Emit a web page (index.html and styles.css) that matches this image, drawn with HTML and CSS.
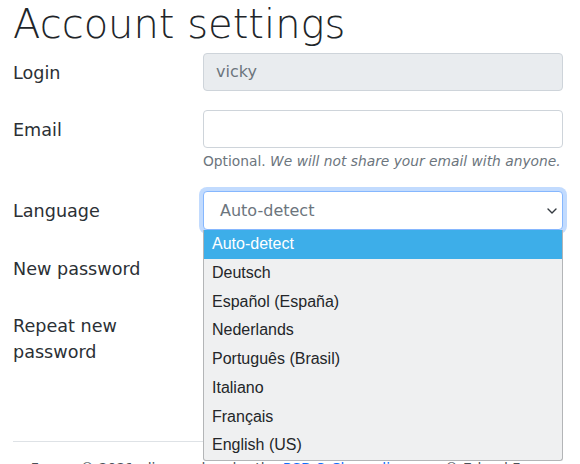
FILE: index.html
```html
<!DOCTYPE html>
<html lang="en">
<head>
<meta charset="utf-8">
<title>Account settings</title>
<link rel="stylesheet" href="styles.css">
</head>
<body>
<main class="page">
  <h1 class="title">Account settings</h1>
  <form class="form">
    <div class="row">
      <label class="label">Login</label>
      <div class="field"><div class="input disabled">vicky</div></div>
    </div>
    <div class="row">
      <label class="label">Email</label>
      <div class="field">
        <div class="input"></div>
        <div class="help">Optional. <em>We will not share your email with anyone.</em></div>
      </div>
    </div>
    <div class="row">
      <label class="label">Language</label>
      <div class="field">
        <div class="select-wrap">
          <div class="input select focus">
            <span>Auto-detect</span>
            <svg class="chev" width="10" height="6" viewBox="0 0 10 6"><path d="M1 1 5 5 9 1" fill="none" stroke="#343a40" stroke-width="1.4" stroke-linecap="round" stroke-linejoin="round"/></svg>
          </div>
          <ul class="menu">
            <li class="opt active">Auto-detect</li>
            <li class="opt">Deutsch</li>
            <li class="opt">Español (España)</li>
            <li class="opt">Nederlands</li>
            <li class="opt">Português (Brasil)</li>
            <li class="opt">Italiano</li>
            <li class="opt">Français</li>
            <li class="opt">English (US)</li>
          </ul>
        </div>
      </div>
    </div>
    <div class="row">
      <label class="label">New password</label>
      <div class="field"><div class="input"></div></div>
    </div>
    <div class="row">
      <label class="label">Repeat new password</label>
      <div class="field"><div class="input"></div></div>
    </div>
  </form>
  <hr class="rule">
  <footer class="footer">Fossar © 2021 · licensed under the <a class="link">BSD-3-Clause license</a> · © Erland Fossar</footer>
</main>
</body>
</html>
```

FILE: styles.css
```css
html, body {
  margin: 0;
  padding: 0;
  background: #fff;
}
body {
  font-family: "DejaVu Sans", sans-serif;
  color: #212529;
}
.page {
  padding: 0 17px 0 13px;
}
.title {
  font-size: 40px;
  line-height: 48px;
  font-weight: 300;
  margin: 0 0 5px 0;
  color: #212529;
}
.form {
  display: flex;
  flex-direction: column;
  gap: 19px;
}
.row {
  display: grid;
  grid-template-columns: 190px 1fr;
}
.label {
  font-size: 17.6px;
  line-height: 26px;
  padding-top: 7px;
  color: #2b3035;
  padding-right: 20px;
}
.field {
  min-width: 0;
}
.input {
  box-sizing: border-box;
  height: 38px;
  border: 1px solid #ced4da;
  border-radius: 4px;
  background: #fff;
  padding: 6px 12px;
  font-size: 16px;
  line-height: 24px;
  color: #6c757d;
}
.input.disabled {
  background: #e9ecef;
}
.help {
  font-size: 13.8px;
  line-height: 21px;
  margin-top: 3px;
  color: #6c757d;
  white-space: nowrap;
}
.select-wrap {
  position: relative;
}
.select {
  height: 39px;
  display: flex;
  align-items: center;
  justify-content: space-between;
  padding: 0 5px 0 16px;
}
.select.focus {
  border-color: #86b7fe;
  box-shadow: 0 0 0 4px rgba(13, 110, 253, 0.25);
}
.chev {
  display: block;
}
.menu {
  position: absolute;
  left: 0;
  right: 0;
  top: 39px;
  margin: 0;
  padding: 0;
  list-style: none;
  background: #eff0f1;
  border: 1px solid #b3b5b7;
  border-top: none;
  border-radius: 0 0 3px 3px;
  font-family: "Liberation Sans", Arial, sans-serif;
  font-size: 16px;
  color: #232629;
  z-index: 5;
}
.opt {
  height: 28.75px;
  line-height: 28.75px;
  padding-left: 8px;
}
.opt.active {
  background: #3daee9;
  color: #fff;
}
.rule {
  border: none;
  border-top: 1px solid #dee2e6;
  margin: 76px 0 16px 0;
}
.footer {
  text-align: center;
  font-size: 14px;
  line-height: 21px;
  color: #495057;
  padding-left: 12px;
}
.link {
  color: #0d6efd;
}
```
